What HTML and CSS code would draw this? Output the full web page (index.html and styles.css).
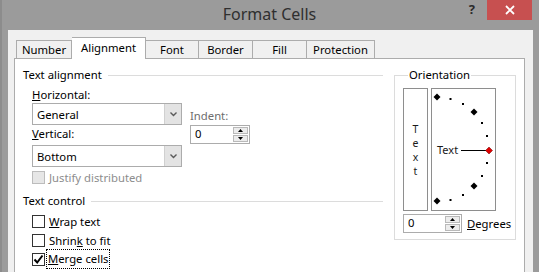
FILE: index.html
```html
<!DOCTYPE html>
<html lang="en">
<head>
  <meta charset="UTF-8">
  <title>Format Cells</title>
  <link rel="stylesheet" href="styles.css">
</head>
<body>

<div class="window">
  <!-- title bar -->
  <div class="titlebar">
    <div></div>
    <div class="title">Format Cells</div>
    <div class="controls">
      <span class="help">?</span>
      <span class="close">
        <svg width="10" height="10" viewBox="0 0 10 10"><path d="M1 1 L9 9 M9 1 L1 9" stroke="#fff" stroke-width="1.8"/></svg>
      </span>
    </div>
  </div>

  <div class="dialog">
    <div class="tabs">
      <div class="tab t-number">Number</div>
      <div class="tab t-align active">Alignment</div>
      <div class="tab t-font">Font</div>
      <div class="tab t-border">Border</div>
      <div class="tab t-fill">Fill</div>
      <div class="tab t-prot">Protection</div>
    </div>

    <div class="panel">
      <div class="left">
        <div class="group-head"><span>Text alignment</span><i></i></div>

        <div class="align-row">
          <div class="col-main">
            <div class="lbl"><u>H</u>orizontal:</div>
            <div class="combo">
              <span class="val">General</span>
              <span class="drop"><svg width="7" height="5" viewBox="0 0 7 5"><path d="M0.5 0.5 L3.5 3.5 L6.5 0.5" fill="none" stroke="#5a5a5a" stroke-width="1.4"/></svg></span>
            </div>
            <div class="lbl lbl-v"><u>V</u>ertical:</div>
            <div class="combo combo-v">
              <span class="val">Bottom</span>
              <span class="drop"><svg width="7" height="5" viewBox="0 0 7 5"><path d="M0.5 0.5 L3.5 3.5 L6.5 0.5" fill="none" stroke="#5a5a5a" stroke-width="1.4"/></svg></span>
            </div>
          </div>
          <div class="col-side">
            <div class="lbl dim">Indent:</div>
            <div class="spin">
              <span class="val">0</span>
              <span class="arrows">
                <span class="up"><svg width="5" height="3" viewBox="0 0 5 3"><path d="M0 3 L2.5 0 L5 3 Z" fill="#000"/></svg></span>
                <span class="down"><svg width="5" height="3" viewBox="0 0 5 3"><path d="M0 0 L2.5 3 L5 0 Z" fill="#000"/></svg></span>
              </span>
            </div>
          </div>
        </div>

        <div class="check-row justify">
          <span class="box disabled"></span>
          <span class="gray">Justify distributed</span>
        </div>

        <div class="group-head head-2"><span>Text control</span><i></i></div>

        <div class="check-row first">
          <span class="box"></span>
          <span><u>W</u>rap text</span>
        </div>
        <div class="check-row">
          <span class="box"></span>
          <span>Shrin<u>k</u> to fit</span>
        </div>
        <div class="check-row">
          <span class="box"><svg width="11" height="11" viewBox="0 0 11 11"><path d="M1.5 5.5 L4.2 8.5 L9.5 1.5" fill="none" stroke="#000" stroke-width="2"/></svg></span>
          <span class="focus"><u>M</u>erge cells</span>
        </div>
      </div>

      <fieldset class="orient">
        <legend>Orientation</legend>
        <div class="orient-row">
          <div class="vtext"><span>T</span><span>e</span><span>x</span><span>t</span></div>
          <div class="dial">
            <svg width="63" height="121" viewBox="0 0 63 121">
              <polygon points="5,4.5 8.5,8 5,11.5 1.5,8" fill="#000"/>
              <rect x="17.5" y="9" width="2" height="2" fill="#000"/>
              <rect x="30" y="14" width="2" height="2" fill="#000"/>
              <polygon points="42,19.5 45.5,23 42,26.5 38.5,23" fill="#000"/>
              <rect x="49" y="33" width="2" height="2" fill="#000"/>
              <rect x="54" y="46" width="2" height="2" fill="#000"/>
              <text x="5" y="65" font-family="Noto Sans, sans-serif" font-size="11" fill="#1a1a1a">Text</text>
              <path d="M29 61.5 H54" stroke="#000" stroke-width="1"/>
              <polygon points="57,58 60.5,61.5 57,65 53.5,61.5" fill="#e00000" stroke="#600" stroke-width="0.5"/>
              <rect x="54" y="73" width="2" height="2" fill="#000"/>
              <rect x="49" y="86" width="2" height="2" fill="#000"/>
              <polygon points="42,93.5 45.5,97 42,100.5 38.5,97" fill="#000"/>
              <rect x="30" y="105" width="2" height="2" fill="#000"/>
              <rect x="17.5" y="110" width="2" height="2" fill="#000"/>
              <polygon points="5,108.5 8.5,112 5,115.5 1.5,112" fill="#000"/>
            </svg>
          </div>
        </div>
        <div class="deg-row">
          <div class="spin spin-deg">
            <span class="val">0</span>
            <span class="arrows">
              <span class="up"><svg width="5" height="3" viewBox="0 0 5 3"><path d="M0 3 L2.5 0 L5 3 Z" fill="#000"/></svg></span>
              <span class="down"><svg width="5" height="3" viewBox="0 0 5 3"><path d="M0 0 L2.5 3 L5 0 Z" fill="#000"/></svg></span>
            </span>
          </div>
          <span class="deg-lbl"><u>D</u>egrees</span>
        </div>
      </fieldset>
    </div>
  </div>
</div>

</body>
</html>
```

FILE: styles.css
```css
body {
  margin: 0;
  font-family: "Segoe UI", "Noto Sans", sans-serif;
  font-size: 11.3px;
  color: #000;
}
.window {
  width: 539px;
  height: 272px;
  background: #9b9b9b;
  border-left: 2px solid #8c8c8c;
  box-sizing: border-box;
  overflow: hidden;
}

/* title bar */
.titlebar {
  height: 30px;
  display: grid;
  grid-template-columns: 1fr auto 1fr;
}
.title {
  font-size: 16px;
  color: #2f2f2f;
  line-height: 28px;
  margin-left: -2px;
}
.controls {
  display: flex;
  justify-content: flex-end;
  align-items: flex-start;
  padding-right: 7px;
}
.help {
  font-weight: bold;
  font-size: 13px;
  color: #2b2b2b;
  line-height: 18px;
  margin-right: 12px;
}
.close {
  width: 45px;
  height: 20px;
  background: #c75050;
  display: flex;
  justify-content: center;
  align-items: center;
}

/* dialog body */
.dialog {
  margin: 0 6px 0 6px;
  background: #f0f0f0;
  height: 242px;
  padding-top: 7px;
}
.tabs {
  display: flex;
  align-items: flex-end;
  padding-left: 8px;
  height: 21px;
}
.tab {
  height: 18px;
  line-height: 18px;
  box-sizing: border-box;
  border: 1px solid #acacac;
  border-bottom: none;
  border-left: none;
  background: #f0f0f0;
  text-align: center;
}
.tab.t-number { border-left: 1px solid #acacac; width: 56px; }
.tab.t-align { width: 74px; }
.tab.t-font { width: 53px; }
.tab.t-border { width: 54px; }
.tab.t-fill { width: 54px; }
.tab.t-prot { width: 68px; }
.tab.active {
  height: 22px;
  line-height: 19px;
  background: #fff;
  margin-bottom: -1px;
  position: relative;
  z-index: 1;
}

.panel {
  margin: 0 8px 0 6px;
  height: 240px;
  background: #fff;
  border: 1px solid #acacac;
  padding: 8px 7px 0 8px;
  display: flex;
  align-items: flex-start;
}
.left {
  width: 360px;
}
.group-head {
  display: flex;
  align-items: center;
  height: 16px;
  line-height: 16px;
}
.group-head i {
  flex: 1;
  border-top: 1px solid #dcdcdc;
  margin-left: 6px;
}
.head-2 { margin-top: 8px; }

.align-row {
  display: flex;
  padding-left: 9px;
  margin-top: 4px;
}
.col-main {
  width: 150px;
  margin-right: 8px;
}
.col-side {
  padding-top: 21px;
}
.lbl {
  height: 16px;
  line-height: 16px;
}
.lbl-v { margin-top: 1px; }
.dim { color: #6d6d6d; }

.combo {
  height: 22px;
  box-sizing: border-box;
  border: 1px solid #acacac;
  display: flex;
  align-items: center;
  background: #fff;
}
.combo-v { margin-top: 3px; }
.combo .val {
  flex: 1;
  padding-left: 4px;
}
.combo .drop {
  width: 16px;
  align-self: stretch;
  background: #e3e3e3;
  border-left: 1px solid #d0d0d0;
  display: flex;
  justify-content: center;
  align-items: center;
}

.spin {
  width: 60px;
  height: 19px;
  box-sizing: border-box;
  border: 1px solid #acacac;
  margin-top: 1px;
  display: flex;
  background: #fff;
}
.spin .val {
  flex: 1;
  padding-left: 4px;
  line-height: 16px;
}
.spin .arrows {
  width: 15px;
  display: flex;
  flex-direction: column;
  padding: 1px 1px 1px 0;
  gap: 1px;
}
.spin .up, .spin .down {
  flex: 1;
  background: #ececec;
  border: 1px solid #b9b9b9;
  display: flex;
  justify-content: center;
  align-items: center;
}
.spin-deg { width: 59px; margin-top: 0; }

.check-row {
  display: flex;
  align-items: center;
  height: 16px;
  padding-left: 9px;
  margin-top: 3px;
}
.check-row.justify { margin-top: 2px; }
.check-row.first { margin-top: 4px; }
.box {
  width: 13px;
  height: 13px;
  box-sizing: border-box;
  border: 1px solid #333;
  background: #fff;
  margin-right: 4px;
  display: flex;
  justify-content: center;
  align-items: center;
}
.box.disabled {
  background: #e6e6e6;
  border-color: #bcbcbc;
}
.gray { color: #8d8d8d; }
.focus {
  outline: 1px dotted #000;
  padding: 1px;
  margin-left: -2px;
  line-height: 16px;
}

/* orientation */
.orient {
  margin: 0 0 0 11px;
  width: 122px;
  box-sizing: border-box;
  border: 1px solid #dcdcdc;
  padding: 5px 0 6px 8px;
  min-width: 0;
}
.orient legend {
  padding: 0 1px;
  margin-left: 5px;
  line-height: 16px;
}
.orient-row {
  display: flex;
  gap: 3px;
}
.vtext {
  width: 25px;
  height: 123px;
  box-sizing: border-box;
  border: 1px solid #8e8e8e;
  display: flex;
  flex-direction: column;
  justify-content: center;
  align-items: center;
  font-size: 10.5px;
  line-height: 14px;
  color: #1a1a1a;
}
.dial {
  width: 65px;
  height: 123px;
  box-sizing: border-box;
  border: 1px solid #8e8e8e;
}
.dial svg { display: block; }
.deg-row {
  display: flex;
  align-items: center;
  margin-top: 3px;
}
.deg-lbl { margin-left: 5px; }
```
